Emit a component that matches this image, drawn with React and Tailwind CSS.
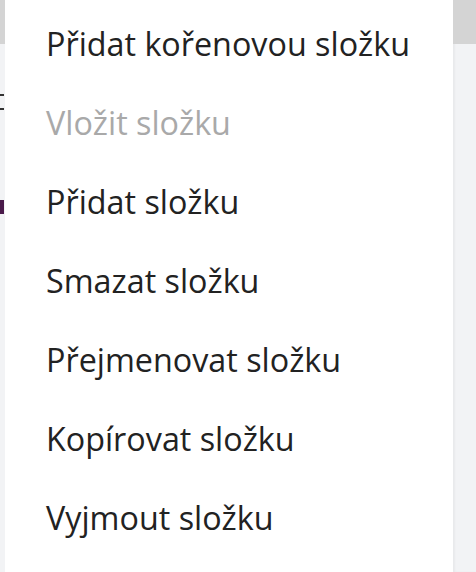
import React from 'react';

const items = [
    { label: 'Přidat kořenovou složku' },
    { label: 'Vložit složku', disabled: true },
    { label: 'Přidat složku' },
    { label: 'Smazat složku' },
    { label: 'Přejmenovat složku' },
    { label: 'Kopírovat složku' },
    { label: 'Vyjmout složku' },
];

export default function App() {
    return (
        <div className="flex h-[572px] w-[476px] overflow-hidden bg-white font-['Open_Sans','Noto_Sans',sans-serif]">
            {/* page behind the menu, left */}
            <div className="flex w-[5px] flex-col bg-[#f2f3f5]">
                <div className="h-[44px] bg-[#d4d4d4]"></div>
                <div className="mt-[50px] h-[2px] w-[4px] bg-[#333]"></div>
                <div className="mt-[12px] h-[2px] w-[4px] bg-[#333]"></div>
                <div className="mt-[90px] h-[14px] w-[4px] bg-[#4a1a4a]"></div>
            </div>

            {/* context menu */}
            <div className="flex-1 bg-white pt-[4px]">
                {items.map((item) => (
                    <div
                        key={item.label}
                        className={
                            item.disabled
                                ? 'flex h-[79px] items-center pl-[41px] text-[32.3px] leading-none text-[#a9a9a9]'
                                : 'flex h-[79px] items-center pl-[41px] text-[32.3px] leading-none text-[#222]'
                        }
                    >
                        {item.label}
                    </div>
                ))}
            </div>

            {/* page behind the menu, right */}
            <div className="flex w-[23px] flex-col bg-[#f2f3f5] shadow-[inset_2px_0_2px_rgba(0,0,0,0.04)]">
                <div className="h-[44px] bg-[#d4d4d4]"></div>
            </div>
        </div>
    );
}
